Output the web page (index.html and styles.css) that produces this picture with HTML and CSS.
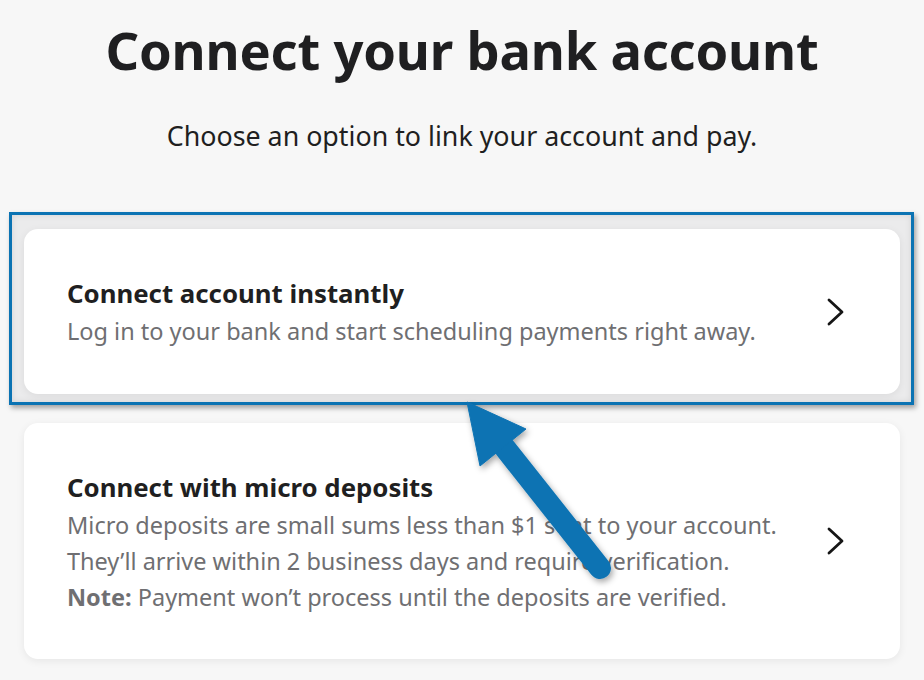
FILE: index.html
```html
<!DOCTYPE html>
<html lang="en">
<head>
<meta charset="utf-8">
<title>Connect your bank account</title>
<link rel="stylesheet" href="styles.css">
</head>
<body>
<main class="page">
  <h1 class="title">Connect your bank account</h1>
  <p class="lead">Choose an option to link your account and pay.</p>
  <div class="options">
    <div class="highlight">
      <a class="card card-instant" href="#">
        <div class="card-text">
          <h2 class="card-title">Connect account instantly</h2>
          <p class="card-desc">Log in to your bank and start scheduling payments right away.</p>
        </div>
        <svg class="chevron" viewBox="0 0 20 28" width="20" height="28" aria-hidden="true"><path d="M3 2 L16 14 L3 26" fill="none" stroke="#161616" stroke-width="2.8" stroke-linecap="round" stroke-linejoin="round"/></svg>
      </a>
    </div>
    <a class="card card-micro" href="#">
      <div class="card-text">
        <h2 class="card-title">Connect with micro deposits</h2>
        <p class="card-desc">Micro deposits are small sums less than $1 sent to your account.<br>They’ll arrive within 2 business days and require verification.<br><b>Note:</b> Payment won’t process until the deposits are verified.</p>
      </div>
      <svg class="chevron" viewBox="0 0 20 28" width="20" height="28" aria-hidden="true"><path d="M3 2 L16 14 L3 26" fill="none" stroke="#161616" stroke-width="2.8" stroke-linecap="round" stroke-linejoin="round"/></svg>
    </a>
  </div>
  <svg class="arrow" viewBox="0 0 924 680" width="924" height="680" aria-hidden="true">
    <defs>
      <filter id="sh" x="-20%" y="-20%" width="140%" height="140%">
        <feDropShadow dx="2" dy="3" stdDeviation="3" flood-color="#000" flood-opacity="0.35"/>
      </filter>
    </defs>
    <g filter="url(#sh)" fill="#0b73b3" stroke="#0b73b3">
      <line x1="505" y1="448" x2="600" y2="568" stroke-width="22" stroke-linecap="round"/>
      <polygon points="467,402 526,429 480,466" stroke-width="1" stroke-linejoin="round"/>
    </g>
  </svg>
</main>
</body>
</html>
```
FILE: styles.css
```css
html, body {
  margin: 0;
  padding: 0;
}
body {
  background: #f7f7f7;
  font-family: "Noto Sans", "Open Sans", sans-serif;
  color: #1b1b1b;
  width: 924px;
  height: 680px;
  overflow: hidden;
}
.page {
  position: relative;
  padding-top: 14px;
}
.title {
  margin: 0;
  text-align: center;
  font-size: 52.5px;
  line-height: 72px;
  font-weight: 700;
  color: #1f1f21;
  letter-spacing: -0.2px;
}
.lead {
  margin: 33px 0 0;
  text-align: center;
  font-size: 26.8px;
  line-height: 34px;
  color: #1f1f21;
}
.options {
  margin-top: 76px;
  padding: 0 24px;
  display: flex;
  flex-direction: column;
  gap: 29px;
}
.highlight {
  position: relative;
}
.highlight::before {
  content: "";
  position: absolute;
  left: -15px;
  top: -17px;
  right: -14px;
  bottom: -11px;
  border: 3px solid #0b73b3;
  box-shadow: 2px 3px 5px rgba(0, 0, 0, 0.35), inset 0 0 6px rgba(0, 0, 0, 0.1);
  background: #ebebec;
  z-index: 0;
}
.card {
  position: relative;
  z-index: 1;
  display: flex;
  align-items: center;
  justify-content: space-between;
  background: #ffffff;
  border-radius: 14px;
  box-shadow: 0 2px 8px rgba(0, 0, 0, 0.07);
  text-decoration: none;
  color: inherit;
  padding: 0 54px 0 43px;
  box-sizing: border-box;
}
.card-instant {
  height: 165px;
}
.card-micro {
  height: 236px;
}
.card-title {
  margin: 0;
  font-size: 25.8px;
  line-height: 38px;
  font-weight: 700;
  color: #1f1f21;
}
.card-desc {
  margin: 1px 0 0;
  font-size: 23.5px;
  line-height: 36px;
  color: #6f6f72;
}
.card-desc b {
  font-weight: 700;
  color: #6f6f72;
}
.chevron {
  flex: none;
  display: block;
}
.arrow {
  position: absolute;
  left: 0;
  top: 0;
  pointer-events: none;
  z-index: 5;
}
```
